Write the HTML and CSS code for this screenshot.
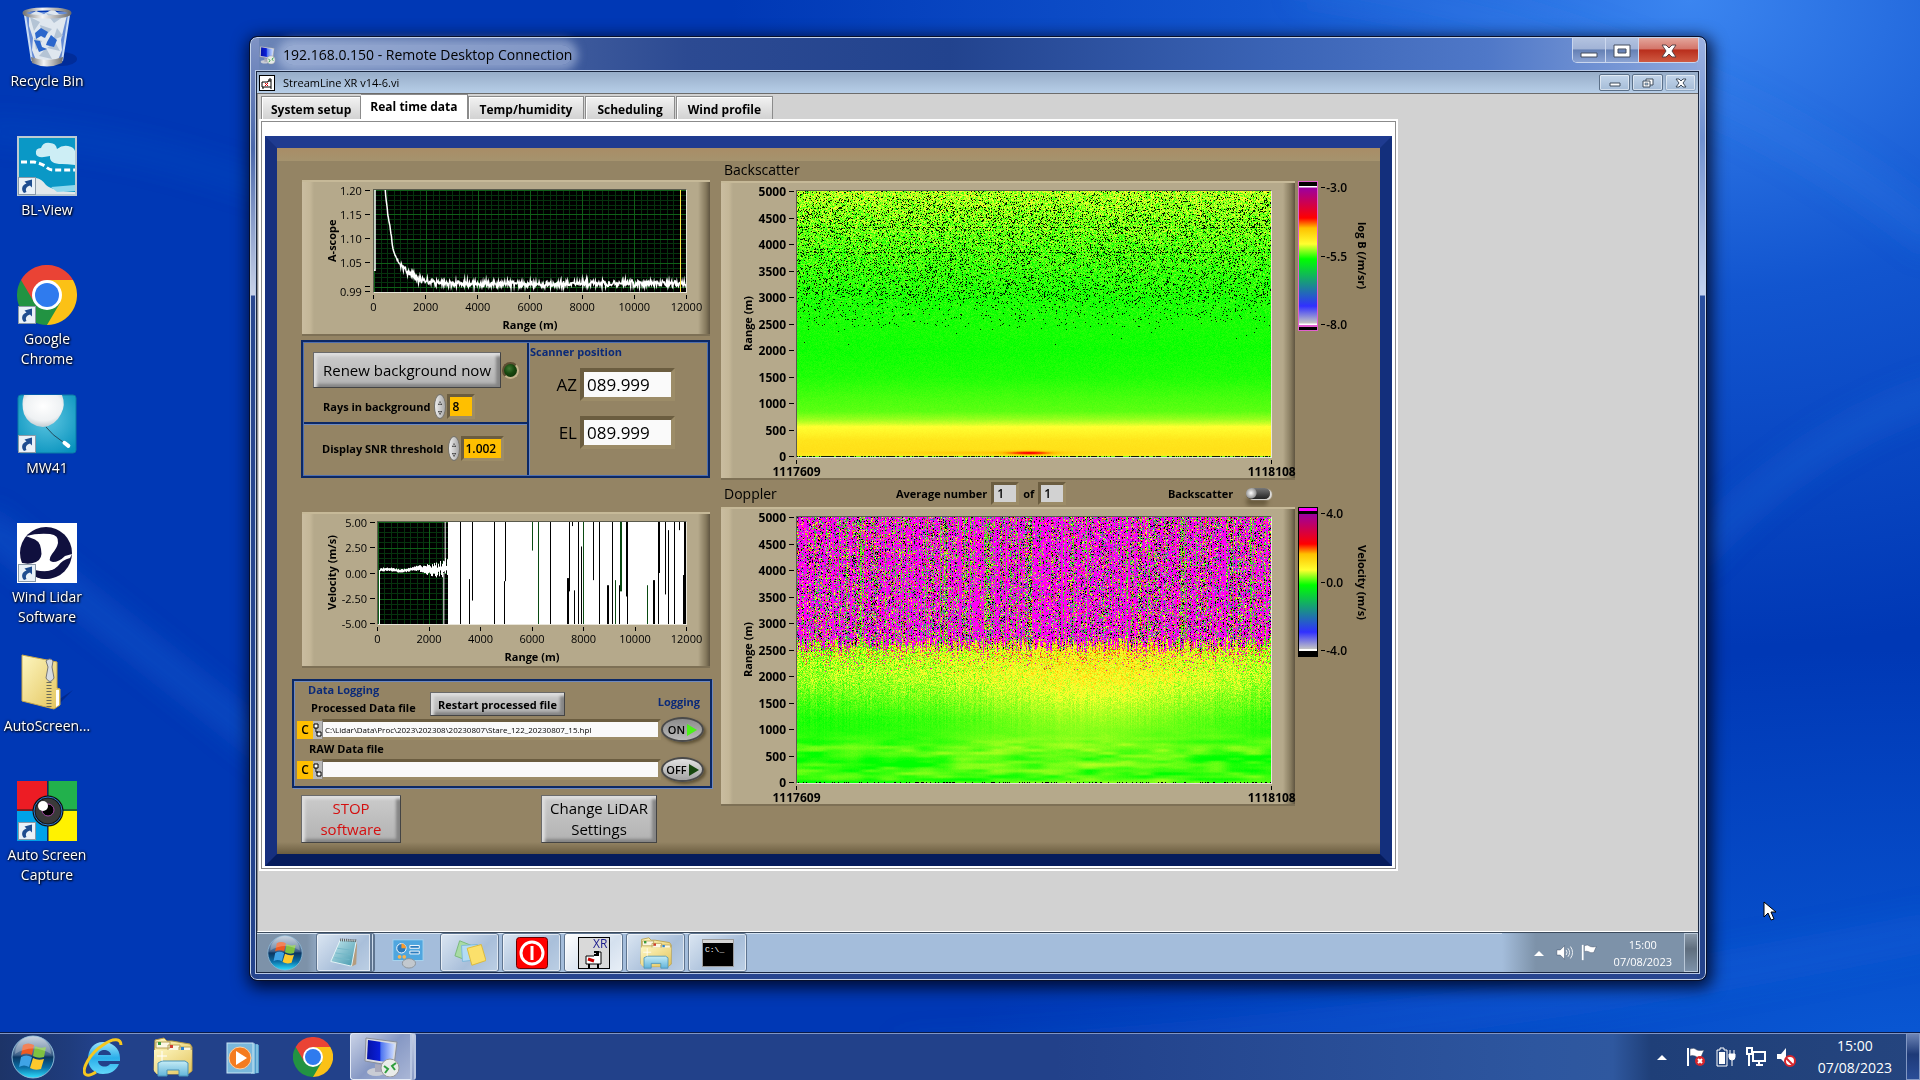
FILE: index.html
```html
<!DOCTYPE html>
<html lang="en">

<head>
  <meta charset="UTF-8">
  <meta name="viewport" content="width=device-width, initial-scale=1.0">
  <title>192.168.0.150 - Remote Desktop Connection</title>
  <link rel="stylesheet" href="styles.css">
</head>

<body>
  <!-- shared icons -->
  <svg class="defs" aria-hidden="true">
    <defs>
      <linearGradient id="g-orb" x1="0" y1="0" x2="0" y2="1">
        <stop offset="0" stop-color="#b9c6d6" /><stop offset=".45" stop-color="#3c5f88" />
        <stop offset=".5" stop-color="#0b3560" /><stop offset=".75" stop-color="#0b6fa6" /><stop offset="1" stop-color="#2ee0ff" />
      </linearGradient>
      <linearGradient id="g-folder" x1="0" y1="0" x2="1" y2="1">
        <stop offset="0" stop-color="#fdf6c0" /><stop offset="1" stop-color="#e3c45c" />
      </linearGradient>
      <linearGradient id="g-screen" x1="0" y1="0" x2="1" y2="0">
        <stop offset="0" stop-color="#0512a8" /><stop offset=".45" stop-color="#0a1fd8" />
        <stop offset=".5" stop-color="#4d74f0" /><stop offset="1" stop-color="#d4e2ff" />
      </linearGradient>
      <linearGradient id="g-note" x1="0" y1="0" x2="1" y2="1">
        <stop offset="0" stop-color="#c8eaf0" /><stop offset="1" stop-color="#3f95ab" />
      </linearGradient>
      <linearGradient id="g-ie" x1="0" y1="0" x2="0" y2="1">
        <stop offset="0" stop-color="#9be4fb" /><stop offset=".5" stop-color="#2aaeea" /><stop offset="1" stop-color="#63d8fb" />
      </linearGradient>
      <linearGradient id="g-steel" x1="0" y1="0" x2="1" y2="0">
        <stop offset="0" stop-color="#777" /><stop offset=".4" stop-color="#f4f4f4" /><stop offset="1" stop-color="#6e6e6e" />
      </linearGradient>
      <radialGradient id="g-balloon" cx=".5" cy=".35" r=".65">
        <stop offset="0" stop-color="#fff" /><stop offset=".7" stop-color="#eef1f3" /><stop offset="1" stop-color="#c3ccd2" />
      </radialGradient>
      <radialGradient id="g-teal" cx=".5" cy=".4" r=".7">
        <stop offset="0" stop-color="#5fc7e2" /><stop offset="1" stop-color="#0792bd" />
      </radialGradient>
      <linearGradient id="g-glass" x1="0" y1="0" x2="0" y2="1">
        <stop offset="0" stop-color="#c5ecf6" /><stop offset="1" stop-color="#62b4da" />
      </linearGradient>
    </defs>

    <symbol id="i-shortcut" viewBox="0 0 18 18">
      <rect x=".5" y=".5" width="17" height="17" fill="#e9f1f8" stroke="#8b9aa8" />
      <path d="M6 16c-3-3-2.500-8 2.500-9.500L6.500 4.500 14 2.500v8L12 8.500c-3.500 1-5 3.500-3.500 6.500z" fill="#1f4d8f" />
    </symbol>

    <symbol id="i-bin" viewBox="0 0 60 60">
      <ellipse cx="44" cy="52" rx="16" ry="7" fill="#001f7d" opacity=".5" />
      <path d="M7 5h46l-8 49q-15 8-30 0z" fill="#9ab9e8" opacity=".65" />
      <path d="M12 8l7-4 8 3 9-5 6 5 8 1-3 12-3 13 1 10-4 10H19l-4-10 1-12-4-12z" fill="#dfe7ef" />
      <path d="M13 10l10 5-6 9zM29 6l8 10 9-6zM23 18l12 4-9 9zM40 21l6 8-10 4zM17 31l8 3-6 9zM30 41l8-6 5 9zM22 49l7-8 6 11z" fill="#b4c4d5" />
      <path d="M18 26l6-5 7 4-3 6-4-2-5 3zM34 28l6 5-3 7-8-2 1-3zM17 33l6 1 2 6 5 2-8 3z" fill="#2a66cc" />
      <path d="M8 8l7 46M52 8l-7 46" stroke="#c9dcf4" stroke-width="2" />
      <ellipse cx="30" cy="6" rx="23" ry="4" fill="none" stroke="url(#g-steel)" stroke-width="3" />
      <path d="M14 50q16 6 32 0l-1 6q-15 7-30 0z" fill="url(#g-steel)" />
    </symbol>

    <symbol id="i-blview" viewBox="0 0 60 60">
      <rect x="1" y="1" width="58" height="58" fill="#0a98c6" stroke="#bccbd3" stroke-width="2" />
      <path d="M19 18q-1-6 5-6 2-6 9-5 6 0 7 6 5-4 11-3 6 1 7 5v14q-8-1-13-1-13 0-12-8-13 3-14-2z" fill="#cdeef5" />
      <path d="M4 26h13q6 1 11 4 4 4 8 4h22" fill="none" stroke="#fff" stroke-width="3" stroke-dasharray="6 3" />
      <path d="M19 42q6 1 10 7 7 6 29 7v2H19z" fill="#e3e8ea" />
      <path d="M34 51l24-2v6l-18 1z" fill="#8ed8ee" />
    </symbol>

    <symbol id="i-chrome" viewBox="0 0 60 60">
      <path d="M30 30V15h26A30 30 0 0 1 30 60z" fill="#fbc116" />
      <path d="M30 30l13 8L30 60A30 30 0 0 1 4 15z" fill="#229342" />
      <path d="M4 15l13 22 13-22h26A30 30 0 0 0 4 15z" fill="#ea4335" />
      <circle cx="30" cy="30" r="15" fill="#fff" />
      <circle cx="30" cy="30" r="12" fill="#2f7bee" />
    </symbol>

    <symbol id="i-balloon" viewBox="0 0 60 60">
      <rect x="1" y="1" width="58" height="58" rx="3" fill="url(#g-teal)" stroke="#0b7ba6" />
      <path d="M7 1h38q4 10-1 19-6 12-18 13Q12 32 7 20 4 10 7 1z" fill="url(#g-balloon)" />
      <path d="M29 33q6 8 17 15" stroke="#234a5c" fill="none" />
      <rect x="45" y="48" width="9" height="4" rx="2" fill="#fff" transform="rotate(38 49 50)" />
    </symbol>

    <symbol id="i-lidar" viewBox="0 0 60 60">
      <rect width="60" height="60" fill="#fff" />
      <circle cx="29" cy="30" r="26" fill="#10103e" />
      <path d="M9 13q11-3 24-2 9 1 8 9-1 5-6 11-5 7 1 8 6 0 12-6l7-2-2 4q-8 2-12 8-6 6-17 6H0V38q10 5 19 1 7-3 5-13-1-9-10-11z" fill="#fff" />
      <path d="M18 47q17 4 26-5l8-4q-9 17-23 18-7 0-11-3z" fill="#10103e" />
    </symbol>

    <symbol id="i-zip" viewBox="0 0 60 60">
      <path d="M32 54l24-16-14 14z" fill="#00237f" opacity=".7" />
      <path d="M5 3l30 6 5 1v26l3 1v16l-6 4L5 49z" fill="url(#g-folder)" stroke="#c9a94a" />
      <path d="M39 38l3 0v15l-3 2z" fill="#fff" />
      <path d="M32 30v26" stroke="#6b6b58" stroke-width="5" stroke-dasharray="1 2" />
      <path d="M29 9q4-4 7 0l-1 6 2 11q-4 7-8 0l2-11z" fill="#d7dce0" stroke="#777" />
    </symbol>

    <symbol id="i-autocap" viewBox="0 0 60 60">
      <path d="M0 0h30v30H0z" fill="#ed1c24" /><path d="M31 0h29v30H31z" fill="#22b14c" />
      <path d="M0 30h30v30H0z" fill="#00a2e8" /><path d="M31 30h29v30H31z" fill="#fff200" />
      <path d="M31 0v60M0 29h60" stroke="#1a1a1a" stroke-width="1" />
      <circle cx="31" cy="30" r="14" fill="#3a3a3a" stroke="#111" stroke-width="3" />
      <circle cx="31" cy="30" r="14" fill="none" stroke="#2f7bd0" stroke-width="1" />
      <circle cx="31" cy="29" r="6" fill="#000" stroke="#a349a4" />
      <circle cx="26" cy="25" r="5" fill="#fff" />
    </symbol>

    <symbol id="i-orb" viewBox="0 0 44 44">
      <circle cx="22" cy="22" r="21" fill="url(#g-orb)" stroke="#8bb8d6" />
      <path d="M12 10q5-3 11 0l-2 10q-6-3-11 0z" fill="#ee5a22" />
      <path d="M24 11q5 3 11 1l-2 10q-6 2-11-1z" fill="#7fc241" />
      <path d="M10 22q5-3 11 0l-3 10q-5-3-10 0z" fill="#3fa3e6" />
      <path d="M22 23q5 3 11 1l-3 10q-6 2-11-1z" fill="#fdc92c" />
      <path d="M4 19A18 18 0 0 1 40 19Q22 8 4 19z" fill="#fff" opacity=".25" />
    </symbol>

    <symbol id="i-ie" viewBox="0 0 40 40">
      <path d="M20 5c9 0 17 6 17 16v3H15c0 5 8 8 12 3h9c-3 7-9 10-16 10C11 37 5 30 5 22 5 12 11 5 20 5zm-5 13h13c-1-6-12-7-13 0z" fill="url(#g-ie)" fill-rule="evenodd" />
      <path d="M38 8c0-6-7-8-18 0C6 17-1 32 2 37c3 3 8 0 11-2" fill="none" stroke="#f6c720" stroke-width="3" />
    </symbol>

    <symbol id="i-explorer" viewBox="0 0 40 40">
      <path d="M2 3l9-2 3 3h5l18 3 2 3v24l-4 3H4l-3-4z" fill="url(#g-folder)" stroke="#b79a43" />
      <path d="M3 5h14v6H3zM15 8h12v6H15zM26 10h12v6H26z" fill="#fbf7e4" stroke="#b9a45a" />
      <path d="M5 5h3v3H5z" fill="#3a9a3a" /><path d="M17 8h3v3h-3z" fill="#d23c2e" /><path d="M28 10h3v3h-3z" fill="#2d83cf" />
      <path d="M1 13h38l-1 21-3 3H4l-3-3z" fill="url(#g-folder)" />
      <path d="M5 39V26l4-2h23l3 2v13h-9v-6H14v6z" fill="url(#g-glass)" stroke="#4a93b8" />
      <path d="M9 14v10M4 19h10" stroke="#fff" />
    </symbol>

    <symbol id="i-wmp" viewBox="0 0 36 36">
      <path d="M26 4l8 2v28l-8 1z" fill="#4f9ccb" /><path d="M29 4v31M32 5v29" stroke="#b4e0f3" />
      <rect x="2" y="4" width="26" height="30" fill="#7ab8dc" stroke="#c9e6f4" />
      <circle cx="15" cy="19" r="11" fill="#f47b20" stroke="#fbd1a5" />
      <path d="M11 12l11 7-11 7z" fill="#fff" />
    </symbol>

    <symbol id="i-rdp" viewBox="0 0 40 40">
      <ellipse cx="15" cy="35" rx="9" ry="4" fill="#c9ccd4" />
      <path d="M14 27l8 1 1 7h-9z" fill="#aab" />
      <path d="M5 1l31 4-3 24-29-5z" fill="#d9dbe0" stroke="#8a8f99" />
      <path d="M7 3l27 4-3 19-25-4z" fill="url(#g-screen)" />
      <circle cx="29" cy="31" r="9" fill="#e9ece9" stroke="#999" />
      <path d="M23 29l4 3-3 4M35 26l-4 3 3 4" fill="none" stroke="#2f9e3d" stroke-width="2" />
    </symbol>

    <symbol id="i-notepad" viewBox="0 0 34 34">
      <path d="M31 4l-1 25-6 3z" fill="#b59c7d" />
      <path d="M13 3l17 1-5 27L3 26z" fill="url(#g-note)" stroke="#e8f5f8" />
      <path d="M13 3l17 1" stroke="#555" stroke-width="3" stroke-dasharray="1 1" />
      <path d="M10 12l15 2M8 17l16 2M7 22l16 2" stroke="#74b9c9" />
    </symbol>

    <symbol id="i-panel" viewBox="0 0 34 34">
      <rect x="1" y="3" width="32" height="22" fill="#4fa6df" stroke="#a8d4ef" />
      <circle cx="10" cy="12" r="5" fill="#2b7bbd" stroke="#fff" /><path d="M10 12V7a5 5 0 0 1 5 5z" fill="#f89b2e" />
      <path d="M19 9h10v3H19zM19 15h10v3H19z" fill="#2b7bbd" stroke="#fff" />
      <circle cx="8" cy="21" r="2" fill="#f8b34e" /><circle cx="13" cy="21" r="2" fill="#f8b34e" />
      <ellipse cx="18" cy="28" rx="7" ry="5" fill="#c2c8ce" stroke="#8b9299" />
    </symbol>

    <symbol id="i-sticky" viewBox="0 0 34 34">
      <path d="M6 4l15 6-7 15-13-5z" fill="#a8dba4" stroke="#78b977" />
      <path d="M8 9l17-1 1 16-17 2z" fill="#b3dcf4" stroke="#7db6d9" />
      <path d="M14 12l15-4 5 17-15 5z" fill="#fbe06b" stroke="#dab93b" />
    </symbol>

    <symbol id="i-power" viewBox="0 0 32 32">
      <rect x=".5" y=".5" width="31" height="31" rx="3" fill="#f00" stroke="#6b0000" />
      <circle cx="16" cy="16" r="11" fill="none" stroke="#fff" stroke-width="3" />
      <path d="M16 9v14" stroke="#fff" stroke-width="3" />
    </symbol>

    <symbol id="i-vi" viewBox="0 0 16 16">
      <rect x=".5" y=".5" width="15" height="15" fill="#fff" stroke="#000" />
      <path d="M3 12V7h6V6h3v6z" fill="none" stroke="#000" />
      <path d="M10 6V4h2v2M4 12v2M12 12v2" fill="none" stroke="#000" />
      <path d="M6 8l3 3M9 8l-3 3" stroke="#d00" />
    </symbol>

    <symbol id="i-up" viewBox="0 0 10 6"><path d="M0 6l5-5 5 5z" fill="#fff" /></symbol>
    <symbol id="i-flag" viewBox="0 0 20 20">
      <path d="M2 1v18" stroke="#fff" stroke-width="2" />
      <path d="M4 2q4-2 7 1 3 1 7 0l-3 7q-4 1-6-1-3-1-5 0z" fill="#fff" stroke="#33415a" stroke-width=".5" />
    </symbol>
    <symbol id="i-speaker" viewBox="0 0 20 20">
      <path d="M1 7h4l5-5v16l-5-5H1z" fill="#fff" stroke="#33415a" stroke-width=".5" />
      <path d="M12 7q2 3 0 6M14 5q4 5 0 10M17 3q5 7 0 14" fill="none" stroke="#fff" />
    </symbol>
  </svg>

  <div class="desktop">
    <svg class="wallpaper" viewBox="0 0 1920 1080" preserveAspectRatio="none" aria-hidden="true">
      <filter id="soft"><feGaussianBlur stdDeviation="14" /></filter>
      <g filter="url(#soft)" fill="none" stroke="#2a7be8">
        <path d="M-20 130q150 5 320 70" stroke-width="14" opacity=".2" />
        <path d="M-20 520q140 110 330 260" stroke-width="26" opacity=".3" />
        <path d="M1690 560q120-130 260-170" stroke-width="26" opacity=".25" />
        <path d="M1300 -20q400 60 640 260" stroke-width="40" opacity=".25" />
        <path d="M900 1060q500-20 1040-130" stroke-width="40" opacity=".15" />
      </g>
    </svg>

    <nav class="shortcuts">
      <a class="shortcut" href="#"><svg class="pic"><use href="#i-bin" /></svg><span>Recycle Bin</span></a>
      <a class="shortcut link" href="#"><svg class="pic"><use href="#i-blview" /></svg><svg class="arrow"><use href="#i-shortcut" /></svg><span>BL-View</span></a>
      <a class="shortcut link" href="#"><svg class="pic"><use href="#i-chrome" /></svg><svg class="arrow"><use href="#i-shortcut" /></svg><span>Google<br>Chrome</span></a>
      <a class="shortcut link" href="#"><svg class="pic"><use href="#i-balloon" /></svg><svg class="arrow"><use href="#i-shortcut" /></svg><span>MW41</span></a>
      <a class="shortcut link" href="#"><svg class="pic"><use href="#i-lidar" /></svg><svg class="arrow"><use href="#i-shortcut" /></svg><span>Wind Lidar<br>Software</span></a>
      <a class="shortcut" href="#"><svg class="pic"><use href="#i-zip" /></svg><span>AutoScreen...</span></a>
      <a class="shortcut link" href="#"><svg class="pic"><use href="#i-autocap" /></svg><svg class="arrow"><use href="#i-shortcut" /></svg><span>Auto Screen<br>Capture</span></a>
    </nav>

    <section class="window">
      <header class="titlebar">
        <svg class="title-icon"><use href="#i-rdp" /></svg>
        <h1>192.168.0.150 - Remote Desktop Connection</h1>
        <div class="win-buttons">
          <button class="min" aria-label="Minimize"><svg viewBox="0 0 18 14"><path d="M1 9h16v4H1z" fill="#fff" stroke="#444d5e" /></svg></button>
          <button class="max" aria-label="Maximize"><svg viewBox="0 0 18 14"><path d="M1 1h16v12H1zM5 5v4h8V5z" fill="#fff" fill-rule="evenodd" stroke="#444d5e" /></svg></button>
          <button class="close" aria-label="Close"><svg viewBox="0 0 18 14"><path d="M2 1h4l3 3 3-3h4l-4 6 4 6h-4l-3-3-3 3H2l4-6z" fill="#fff" stroke="#5a4045" /></svg></button>
        </div>
      </header>

      <div class="remote">
        <div class="app-title">
          <svg class="vi-icon"><use href="#i-vi" /></svg>
          <h2>StreamLine XR v14-6.vi</h2>
          <div class="mdi-buttons">
            <button aria-label="Minimize window"><svg viewBox="0 0 12 10"><path d="M1 5h10v3H1z" fill="#fff" stroke="#3f4c5c" /></svg></button>
            <button aria-label="Restore window"><svg viewBox="0 0 12 10"><path d="M4 1h7v6H4z" fill="#fff" stroke="#3f4c5c" /><path d="M1 3h7v6H1z" fill="#fff" stroke="#3f4c5c" /><path d="M3 5h3v2H3z" fill="#9db4cc" stroke="#3f4c5c" stroke-width=".5" /></svg></button>
            <button class="faded" aria-label="Close window"><svg viewBox="0 0 12 10"><path d="M1 1h3l2 2 2-2h3L8 5l3 4H8L6 7 4 9H1l3-4z" fill="#fff" stroke="#3f4c5c" /></svg></button>
          </div>
        </div>

        <main class="workspace">
          <div class="tabs" role="tablist">
            <button class="tab" role="tab">System setup</button>
            <button class="tab active" role="tab" aria-selected="true">Real time data</button>
            <button class="tab" role="tab">Temp/humidity</button>
            <button class="tab" role="tab">Scheduling</button>
            <button class="tab" role="tab">Wind profile</button>
          </div>

          <div class="page">
            <div class="panel">
              <div class="left-col">
                <figure class="chart small scope">
                  <div class="y-label">A-scope</div>
                  <div class="y-ticks"><span>1.20</span><span>1.15</span><span>1.10</span><span>1.05</span><span></span><span>0.99</span></div>
                  <canvas id="ascope"></canvas>
                  <div class="x-ticks"><span>0</span><span>2000</span><span>4000</span><span>6000</span><span>8000</span><span>10000</span><span>12000</span></div>
                  <figcaption class="x-label">Range (m)</figcaption>
                </figure>

                <div class="controls">
                  <div class="cell background">
                    <div class="line">
                      <button class="metal renew">Renew background now</button>
                      <i class="led"></i>
                    </div>
                    <div class="line setting">
                      <label for="rays">Rays in background</label>
                      <span class="spinner" aria-hidden="true"><i>▵</i><i>▿</i></span>
                      <input class="amber rays" id="rays" value="8">
                    </div>
                  </div>
                  <div class="cell threshold">
                    <div class="line setting">
                      <label for="snr">Display SNR threshold</label>
                      <span class="spinner" aria-hidden="true"><i>▵</i><i>▿</i></span>
                      <input class="amber snr" id="snr" value="1.002">
                    </div>
                  </div>
                  <div class="cell scanner">
                    <h3>Scanner position</h3>
                    <div class="axis"><label for="az">AZ</label><input id="az" value="089.999" readonly></div>
                    <div class="axis"><label for="el">EL</label><input id="el" value="089.999" readonly></div>
                  </div>
                </div>

                <figure class="chart small velocity">
                  <div class="y-label">Velocity (m/s)</div>
                  <div class="y-ticks"><span>5.00</span><span>2.50</span><span>0.00</span><span>-2.50</span><span>-5.00</span></div>
                  <canvas id="velocity"></canvas>
                  <div class="x-ticks"><span>0</span><span>2000</span><span>4000</span><span>6000</span><span>8000</span><span>10000</span><span>12000</span></div>
                  <figcaption class="x-label">Range (m)</figcaption>
                </figure>

                <div class="logging">
                  <div class="log-head">
                    <div>
                      <h3>Data Logging</h3>
                      <label for="processed">Processed Data file</label>
                    </div>
                    <button class="metal restart">Restart processed file</button>
                    <h3 class="log-title">Logging</h3>
                  </div>
                  <div class="path">
                    <b class="drive">C</b>
                    <svg class="branch" viewBox="0 0 9 18"><path d="M1 3h4v4H1zM4 11h4v4H4zM3 7v4h2" fill="#fff" stroke="#000" /></svg>
                    <input id="processed" value="C:\Lidar\Data\Proc\2023\202308\20230807\Stare_122_20230807_15.hpl">
                    <button class="toggle on">ON</button>
                  </div>
                  <label class="raw-label" for="raw">RAW Data file</label>
                  <div class="path">
                    <b class="drive">C</b>
                    <svg class="branch" viewBox="0 0 9 18"><path d="M1 3h4v4H1zM4 11h4v4H4zM3 7v4h2" fill="#fff" stroke="#000" /></svg>
                    <input id="raw" value="">
                    <button class="toggle off">OFF</button>
                  </div>
                </div>

                <div class="actions">
                  <button class="metal stop">STOP<br>software</button>
                  <button class="metal change">Change LiDAR<br>Settings</button>
                </div>
              </div>

              <div class="right-col">
                <h3 class="chart-title">Backscatter</h3>
                <div class="plot-row">
                  <figure class="chart big">
                    <div class="y-label">Range (m)</div>
                    <div class="y-ticks"><span>5000</span><span>4500</span><span>4000</span><span>3500</span><span>3000</span><span>2500</span><span>2000</span><span>1500</span><span>1000</span><span>500</span><span>0</span></div>
                    <canvas id="backscatter"></canvas>
                    <div class="x-ticks"><span>1117609</span><span>1118108</span></div>
                  </figure>
                  <div class="scale">
                    <div class="ramp pink"></div>
                    <div class="scale-ticks"><span>-3.0</span><span>-5.5</span><span>-8.0</span></div>
                    <div class="scale-label">log B (/m/sr)</div>
                  </div>
                </div>
                <div class="mid-row">
                  <h3 class="chart-title">Doppler</h3>
                  <div class="average">
                    <label for="avg">Average number</label>
                    <input id="avg" value="1">
                    <label for="avg-total">of</label>
                    <input id="avg-total" value="1">
                  </div>
                  <label class="switch">Backscatter<input type="checkbox"><i></i></label>
                </div>
                <div class="plot-row">
                  <figure class="chart big">
                    <div class="y-label">Range (m)</div>
                    <div class="y-ticks"><span>5000</span><span>4500</span><span>4000</span><span>3500</span><span>3000</span><span>2500</span><span>2000</span><span>1500</span><span>1000</span><span>500</span><span>0</span></div>
                    <canvas id="doppler"></canvas>
                    <div class="x-ticks"><span>1117609</span><span>1118108</span></div>
                  </figure>
                  <div class="scale">
                    <div class="ramp dark"></div>
                    <div class="scale-ticks"><span>4.0</span><span>0.0</span><span>-4.0</span></div>
                    <div class="scale-label">Velocity (m/s)</div>
                  </div>
                </div>
              </div>
            </div>
          </div>
        </main>

        <footer class="remote-bar">
          <button class="start" aria-label="Start"><svg><use href="#i-orb" /></svg></button>
          <button class="task stacked" aria-label="Notepad"><svg><use href="#i-notepad" /></svg></button>
          <button class="task pinned" aria-label="Control Panel"><svg><use href="#i-panel" /></svg></button>
          <button class="task" aria-label="Sticky Notes"><svg><use href="#i-sticky" /></svg></button>
          <button class="task" aria-label="Shutdown"><svg><use href="#i-power" /></svg></button>
          <button class="task current" aria-label="StreamLine XR">
            <svg viewBox="0 0 32 32">
              <rect x=".5" y=".5" width="31" height="31" fill="#d9d9d9" stroke="#000" />
              <text class="xr-text" x="15" y="11">XR</text>
              <path d="M8 19h8l4-4h3v12H8z" fill="#fff" stroke="#000" />
              <path d="M16 15h4v3h-4M11 27v5M20 27v5" fill="none" stroke="#000" stroke-width="2" />
              <path d="M10 22l6 2" stroke="#c00" stroke-width="3" />
            </svg>
          </button>
          <button class="task" aria-label="Explorer"><svg><use href="#i-explorer" /></svg></button>
          <button class="task" aria-label="Command Prompt">
            <svg viewBox="0 0 32 28">
              <rect x=".5" y=".5" width="31" height="27" fill="#000" stroke="#9a9a9a" />
              <path d="M1 1h30v3H1z" fill="#d5d5d5" />
              <text class="cmd-text" x="3" y="13">C:\_</text>
            </svg>
          </button>
          <div class="tray">
            <svg class="up"><use href="#i-up" /></svg>
            <svg><use href="#i-speaker" /></svg>
            <svg><use href="#i-flag" /></svg>
            <time>15:00<br>07/08/2023</time>
            <button class="peek" aria-label="Show desktop"></button>
          </div>
        </footer>
      </div>
    </section>

    <footer class="taskbar">
      <button class="start" aria-label="Start"><svg><use href="#i-orb" /></svg></button>
      <button class="item" aria-label="Internet Explorer"><svg><use href="#i-ie" /></svg></button>
      <button class="item" aria-label="Windows Explorer"><svg><use href="#i-explorer" /></svg></button>
      <button class="item" aria-label="Media Player"><svg class="wmp"><use href="#i-wmp" /></svg></button>
      <button class="item" aria-label="Google Chrome"><svg><use href="#i-chrome" /></svg></button>
      <button class="item open" aria-label="Remote Desktop"><svg><use href="#i-rdp" /></svg></button>
      <div class="tray">
        <svg class="up"><use href="#i-up" /></svg>
        <svg viewBox="0 0 20 20"><use href="#i-flag" /><circle cx="14" cy="14" r="5" fill="#d8262c" /><path d="M12 12l4 4M16 12l-4 4" stroke="#fff" stroke-width="2" /></svg>
        <svg viewBox="0 0 20 20"><path d="M1 3h3V1h4v2h3v16H1z" fill="none" stroke="#fff" stroke-width="1" /><path d="M3 5h6v12H3z" fill="#fff" /><path d="M13 7h6v3q0 3-3 3t-3-3zM14 3v4M18 3v4M16 13v6" fill="#fff" stroke="#fff" stroke-width="1" /></svg>
        <svg viewBox="0 0 20 20"><path d="M7 5h12v9H7zM10 18h7M13 14v4M1 1h5v6H1zM3 7v12" fill="none" stroke="#fff" stroke-width="2" /></svg>
        <svg viewBox="0 0 20 20"><path d="M1 7h4l5-6v16l-5-5H1z" fill="#fff" /><circle cx="14" cy="14" r="5" fill="#fff" stroke="#d8262c" stroke-width="2" /><path d="M10 11l7 7" stroke="#d8262c" stroke-width="2" /></svg>
        <time>15:00<br>07/08/2023</time>
        <button class="peek" aria-label="Show desktop"></button>
      </div>
    </footer>

    <svg class="cursor" viewBox="0 0 13 20" aria-hidden="true"><path d="M1 1v15l4-4 3 7 3-1-3-7h5z" fill="#fff" stroke="#000" /></svg>
  </div>

  <script src="script.js"></script>
</body>

</html>
```
FILE: styles.css
```css
* {
  box-sizing: border-box;
}

body {
  margin: 0;
  font-family: "Open Sans", "Noto Sans", sans-serif;
  font-size: 14px;
  color: #000;
}

h1,
h2,
h3,
figure {
  margin: 0;
  font-weight: 400;
}

button,
input {
  font-family: inherit;
  color: inherit;
  padding: 0;
  margin: 0;
  border: none;
}

button {
  cursor: pointer;
}

.defs {
  position: absolute;
  width: 0;
  height: 0;
}

.desktop {
  position: relative;
  height: 100vh;
  overflow: hidden;
  background:
    radial-gradient(ellipse 50% 60% at 88% 0, #3b85f0 0, rgba(30, 105, 225, 0.6) 45%, rgba(0, 60, 190, 0) 100%),
    radial-gradient(ellipse 50% 40% at 100% 100%, #0a5ad6 0, rgba(0, 60, 190, 0) 100%),
    #0038b5;
}

.wallpaper {
  position: absolute;
  width: 100%;
  height: 100%;
}

/* desktop icons */
.shortcuts {
  position: absolute;
  top: 7px;
  left: 0;
  width: 94px;
  display: flex;
  flex-direction: column;
}

.shortcut {
  position: relative;
  height: 129px;
  display: flex;
  flex-direction: column;
  align-items: center;
  gap: 4px;
  color: #fff;
  text-decoration: none;
  text-align: center;
  line-height: 20px;
  text-shadow: 1px 1px 2px #000, 0 0 3px #000;
}

.shortcut .pic {
  width: 60px;
  height: 60px;
}

.shortcut .arrow {
  position: absolute;
  left: 18px;
  top: 41px;
  width: 18px;
  height: 18px;
}

.shortcut span {
  white-space: nowrap;
}

/* remote desktop window */
.window {
  position: absolute;
  left: 250px;
  right: 214px;
  top: 37px;
  bottom: 100px;
  padding: 0 6px 6px 5px;
  display: flex;
  flex-direction: column;
  border: 1px solid #c4d3ea;
  border-radius: 7px;
  outline: 1px solid #07102c;
  background:
    linear-gradient(to bottom, #7f93c4 0, #4a67aa 110px, #8fa2cd 190px, #c8d2e8 257px, #2a4890 258px, #24438c 100%) left / 8px 100% no-repeat,
    linear-gradient(to bottom, #9db2e2 0, #6f90d0 100px, #a9bce4 200px, #c4d2ef 257px, #2a4fa0 258px, #24438c 100%) right / 8px 100% no-repeat,
    linear-gradient(to right, #6d86b8 0, #2c4a92 30%, #22438e 48%, #3a63b5 70%, #4f78c8 85%, #8fa9dd 100%) top / 100% 36px no-repeat,
    #27458f;
  box-shadow: 2px 4px 16px 4px rgba(0, 0, 20, 0.8);
}

.titlebar {
  height: 33px;
  display: flex;
  align-items: center;
}

.title-icon {
  width: 18px;
  height: 20px;
  margin: 0 7px 0 2px;
}

.titlebar h1 {
  font-size: 14px;
  line-height: 20px;
  border-radius: 10px;
  background: rgba(195, 210, 238, 0.5);
  box-shadow: 0 0 9px 6px rgba(195, 210, 238, 0.5);
}

.win-buttons {
  align-self: flex-start;
  margin-left: auto;
  display: flex;
  border: 1px solid #c9d6ee;
  border-top: none;
  border-radius: 0 0 5px 5px;
  overflow: hidden;
}

.win-buttons button {
  width: 33px;
  height: 24px;
  border-right: 1px solid #cdd8ee;
  background: linear-gradient(to bottom, #b3c3e0 0, #a1b3d6 45%, #6580b4 50%, #8ba3d3 100%);
}

.win-buttons .close {
  width: 59px;
  border-right: none;
  background: linear-gradient(to bottom, #e3a69c 0, #d4766a 45%, #b92e1c 50%, #cf5a42 100%);
}

.win-buttons svg {
  width: 18px;
  height: 14px;
  vertical-align: middle;
}

.remote {
  flex: 1;
  min-height: 0;
  display: flex;
  flex-direction: column;
  border: 1px solid #1a2740;
  outline: 1px solid #b7c8e6;
  background: #d2d2d2;
}

.app-title {
  height: 22px;
  flex: none;
  display: flex;
  align-items: center;
  padding: 0 2px;
  border-bottom: 1px solid #6c6c6c;
  background: linear-gradient(to bottom, #97adc8, #b7cee8);
}

.vi-icon {
  width: 16px;
  height: 16px;
  margin-right: 8px;
}

.app-title h2 {
  font-size: 11px;
}

.mdi-buttons {
  margin-left: auto;
  display: flex;
  gap: 2px;
}

.mdi-buttons button {
  width: 31px;
  height: 17px;
  display: flex;
  align-items: center;
  justify-content: center;
  border: 1px solid #5b7089;
  border-radius: 2px;
  box-shadow: inset 0 0 0 1px rgba(255, 255, 255, 0.5);
  background: linear-gradient(to bottom, #c3d5ea, #a5bcd7);
}

.mdi-buttons .faded {
  border-color: #8ea6c1;
}

.mdi-buttons svg {
  width: 12px;
  height: 10px;
}

/* LabVIEW front panel */
.workspace {
  flex: 1;
  min-height: 0;
  padding-left: 3px;
  border-left: 1px solid #8a8a8a;
  border-bottom: 1px solid #fff;
  overflow: hidden;
}

.tabs {
  display: flex;
  align-items: flex-end;
  height: 27px;
}

.tab {
  height: 25px;
  padding: 0 9px;
  font-size: 12px;
  font-weight: 700;
  border: 1px solid #8b8b8b;
  border-bottom: none;
  box-shadow: inset 1px 1px #fff;
  background: linear-gradient(to bottom, #f2f2f2, #cfcfcf);
}

.tab.active {
  height: 27px;
  padding-bottom: 4px;
  background: #fff;
  border-left: none;
}

.tab.active ~ .tab {
  padding: 0 11px;
  margin-right: 1px;
}

.page {
  width: 79%;
  padding: 14px 3px 2px 3px;
  background: #fff;
  border: 1px solid #8b8b8b;
  outline: 2px solid #fff;
}

.panel {
  display: grid;
  grid-template-columns: 420px minmax(0, 1fr);
  column-gap: 9px;
  padding: 0 7px 11px 15px;
  border: 12px solid #17307f;
  border-color: #1f3b90 #132f7c #061c5c #17307f;
  background:
    linear-gradient(to bottom, #a98d66, #a5936e) top / 100% 13px no-repeat,
    linear-gradient(to bottom, rgba(148, 132, 100, 0), #6b5d40) bottom / 100% 12px no-repeat,
    #948464;
}

.left-col {
  padding-top: 32px;
}

.right-col {
  padding-top: 11px;
}

.chart {
  display: grid;
  background:
    linear-gradient(to right, #cabda0 0, #c4b798 8px, rgba(181, 169, 139, 0) 12px),
    linear-gradient(to left, #5f5541 0, #85795d 4px, rgba(181, 169, 139, 0) 12px),
    #b5a98b;
  border-top: 2px solid #c6b998;
  border-bottom: 2px solid #7d7055;
}

.chart canvas {
  grid-area: plot;
  width: 100%;
  height: 100%;
  border: 1px solid #5a5a4c;
  border-right-color: #e8e4d8;
  border-bottom-color: #e8e4d8;
  background: #000;
}

.chart.small {
  height: 156px;
  margin-left: 10px;
  margin-right: 2px;
  padding: 7px 23px 2px 22px;
  grid-template-columns: 16px 33px minmax(0, 1fr);
  grid-template-rows: 104px 22px 1fr;
  grid-template-areas: "ylabel yticks plot" ". . xticks" ". . xlabel";
  font-size: 11px;
}

.chart.velocity {
  grid-template-columns: 16px 37px minmax(0, 1fr);
}

.chart.big {
  flex: 1;
  min-width: 0;
  height: 299px;
  padding: 7px 23px 2px 19px;
  grid-template-columns: 16px 40px minmax(0, 1fr);
  grid-template-rows: 268px 1fr;
  grid-template-areas: "ylabel yticks plot" ". . xticks";
  font-size: 12px;
  font-weight: 700;
}

.y-label {
  grid-area: ylabel;
  writing-mode: vertical-rl;
  transform: rotate(180deg);
  text-align: center;
  line-height: 16px;
  font-size: 11px;
  font-weight: 700;
}

.x-label {
  grid-area: xlabel;
  text-align: center;
  line-height: 20px;
  font-weight: 700;
}

.y-ticks {
  grid-area: yticks;
  display: flex;
  flex-direction: column;
  justify-content: space-between;
  padding: 1px 0;
}

.scope .y-ticks {
  display: grid;
  grid-template-rows: 5fr 5fr 5fr 5fr 1fr 1px;
}

.y-ticks span {
  height: 1px;
  display: flex;
  align-items: center;
  justify-content: flex-end;
  gap: 3px;
  padding-right: 2px;
  line-height: 1px;
}

.y-ticks span::after {
  content: "";
  width: 5px;
  height: 1px;
  background: #000;
}

.x-ticks {
  grid-area: xticks;
  display: flex;
  justify-content: space-between;
  padding-top: 2px;
}

.x-ticks span {
  width: 1px;
  display: flex;
  flex-direction: column;
  align-items: center;
  white-space: nowrap;
  line-height: 16px;
}

.x-ticks span::before {
  content: "";
  width: 1px;
  height: 4px;
  background: #000;
}

/* background / threshold / scanner box */
.controls {
  height: 138px;
  margin: 4px 2px 34px 9px;
  display: grid;
  grid-template-columns: 226px minmax(0, 1fr);
  grid-template-rows: 82px minmax(0, 1fr);
  border: 1px solid #0b2866;
  outline: 1px solid #4f6fae;
  outline-offset: -3px;
  font-size: 11px;
}

.cell {
  border: 1px solid #0b2866;
  box-shadow: inset 1px 1px #6f8ac0;
}

.background {
  padding: 10px 0 0 10px;
}

.threshold {
  padding: 12px 0 0 9px;
}

.scanner {
  grid-column: 2;
  grid-row: 1 / 3;
  padding: 2px 33px 0 1px;
}

.line {
  display: flex;
  align-items: center;
  gap: 1px;
}

.setting {
  padding: 6px 0 0 10px;
}

.threshold .setting {
  padding-top: 0;
}

.setting label {
  font-weight: 700;
  margin-right: 3px;
}

.metal {
  border: 1px solid #4c4c4c;
  border-color: #6a6a6a #444 #444 #6a6a6a;
  box-shadow: inset 3px 3px 3px #dedede, inset -4px -3px 3px #858585;
  background: linear-gradient(to bottom, #cbcbcb, #b2b2b2);
  font-weight: 400;
}

.renew {
  width: 188px;
  height: 36px;
  font-size: 15px;
}

.led {
  width: 17px;
  height: 17px;
  border-radius: 50%;
  border: 2px solid #5d4f33;
  border-color: #5d4f33 #c3b38c #c3b38c #5d4f33;
  background: radial-gradient(circle at 40% 35%, #3f7a33 0, #17470f 45%, #0a2a06 100%);
}

.spinner {
  width: 12px;
  height: 25px;
  display: flex;
  flex-direction: column;
  justify-content: center;
  align-items: center;
  border-radius: 50%;
  border: 1px solid #77746c;
  background: linear-gradient(to right, #eee, #a9a9a9);
}

.spinner i {
  font-size: 8px;
  font-style: normal;
  line-height: 10px;
}

.amber {
  height: 25px;
  padding-left: 2px;
  border: 3px solid;
  border-color: #6b5d40 #9c8c68 #9c8c68 #6b5d40;
  background: #ffbf00;
  font-size: 12px;
  font-weight: 600;
}

.rays {
  width: 28px;
}

.snr {
  width: 43px;
}

.controls h3,
.logging h3 {
  color: #0b2a78;
  font-size: 11px;
  font-weight: 700;
  line-height: 15px;
}

.axis {
  display: flex;
  align-items: center;
  justify-content: flex-end;
  gap: 3px;
  margin: 9px 0 15px;
  font-size: 17px;
}

.axis input {
  width: 95px;
  height: 33px;
  padding-left: 3px;
  border: 4px solid;
  border-color: #6b5d40 #9c8c68 #9c8c68 #6b5d40;
  background: #fafafa;
  font-size: 17px;
}

/* data logging */
.logging {
  margin-top: 11px;
  height: 109px;
  padding: 1px 8px 0 3px;
  border: 2px solid #0b2866;
  box-shadow: inset 1px 1px #6f8ac0, 1px 1px #6f8ac0;
  font-size: 11px;
}

.logging label {
  font-weight: 700;
}

.log-head {
  height: 36px;
  display: grid;
  grid-template-columns: 133px 135px 1fr;
}

.log-head h3 {
  padding-left: 11px;
}

.log-head label {
  display: block;
  padding-left: 14px;
  line-height: 22px;
}

.restart {
  height: 24px;
  margin-top: 10px;
  font-size: 11px;
  font-weight: 700;
}

.log-head .log-title {
  padding: 12px 2px 0 0;
  text-align: right;
}

.path {
  height: 23px;
  display: flex;
  align-items: center;
}

.drive {
  width: 16px;
  height: 18px;
  line-height: 18px;
  text-align: center;
  font-size: 12px;
  font-weight: 600;
  background: #ffbf00;
}

.branch {
  width: 9px;
  height: 18px;
  background: #b9b9b9;
}

.path input {
  flex: 1;
  min-width: 0;
  height: 21px;
  padding-left: 2px;
  border: 3px solid;
  border-color: #6b5d40 #9c8c68 #9c8c68 #8a8a8a;
  border-left-width: 1px;
  background: #fafafa;
  font-size: 8px;
}

.raw-label {
  display: block;
  padding-left: 12px;
  line-height: 15px;
  margin-bottom: 2px;
}

.toggle {
  width: 43px;
  height: 25px;
  margin-right: -2px;
  display: flex;
  align-items: center;
  justify-content: center;
  gap: 2px;
  border-radius: 50%;
  border: 2px solid #4a4a4a;
  box-shadow: 2px 2px 3px #5f5337;
  background: linear-gradient(to bottom, #e2e2e2, #a3a3a3);
  font-size: 11px;
  font-weight: 600;
}

.toggle.on {
  background: linear-gradient(to bottom, #8d8d8d, #b9b9b9);
}

.toggle::after {
  content: "";
  border: 6px solid transparent;
  border-left: 10px solid #17470f;
  border-right: none;
}

.toggle.on::after {
  border-left-color: #4cf01a;
}

.actions {
  display: flex;
  justify-content: space-between;
  padding: 7px 55px 0 9px;
}

.actions .metal {
  height: 48px;
  font-size: 15px;
  line-height: 21px;
}

.actions .stop {
  width: 100px;
  color: #d40f0f;
}

.change {
  width: 116px;
}

/* heat maps */
.chart-title {
  padding-left: 3px;
  font-size: 14px;
  line-height: 22px;
}

.plot-row {
  display: flex;
}

.scale {
  width: 78px;
  height: 150px;
  padding-left: 3px;
  display: flex;
  gap: 3px;
}

.ramp {
  width: 20px;
  border: 1px solid #e25fd0;
  background: linear-gradient(to bottom, #000 4px, #fff 4px, #fff 5px, #9c00a0 6px, #ff0000 36px, #ffc000 46px, #ffff30 62px, #00ff00 77px, #3030ff 124px, #c4c4c4 141px, #fff 142px, #fff 143px, #e25fd0 143px, #e25fd0 145px, #000 145px);
}

.ramp.dark {
  border-color: #000;
  background: linear-gradient(to bottom, #ff00ff 3px, #000 3px, #000 6px, #9c00a0 6px, #ff0000 36px, #ffc000 46px, #ffff30 62px, #00ff00 77px, #3030ff 124px, #c4c4c4 141px, #fff 141px, #fff 143px, #000 143px);
}

.scale-ticks {
  width: 29px;
  display: flex;
  flex-direction: column;
  justify-content: space-between;
  padding: 6px 0;
  font-size: 12px;
  font-weight: 600;
}

.scale-ticks span {
  height: 1px;
  display: flex;
  align-items: center;
  gap: 1px;
  line-height: 1px;
}

.scale-ticks span::before {
  content: "";
  width: 4px;
  height: 1px;
  background: #000;
}

.scale-label {
  writing-mode: vertical-rl;
  text-align: center;
  line-height: 18px;
  font-size: 11px;
  font-weight: 700;
}

.mid-row {
  height: 27px;
  display: flex;
  align-items: center;
  padding-right: 103px;
}

.mid-row .chart-title {
  width: 175px;
}

.average {
  display: flex;
  align-items: center;
  gap: 4px;
  font-size: 11px;
  font-weight: 700;
}

.average input {
  width: 28px;
  height: 23px;
  padding-left: 3px;
  border: 3px solid;
  border-color: #6b5d40 #9c8c68 #9c8c68 #6b5d40;
  background: #d2d2d2;
  font-size: 12px;
  font-weight: 600;
}

.switch {
  margin-left: auto;
  display: flex;
  align-items: center;
  gap: 13px;
  font-size: 11px;
  font-weight: 700;
}

.switch input {
  appearance: none;
  width: 0;
  height: 0;
}

.switch i {
  width: 24px;
  height: 11px;
  margin-left: -13px;
  border-radius: 6px;
  background: radial-gradient(circle at 5px 5px, #fff 0, #999 5px, transparent 6px), linear-gradient(to bottom, #777, #222);
  box-shadow: 2px 1px 1px #ddd, -1px 8px 4px -1px #6b5d40;
}

/* inner taskbar */
.remote-bar {
  height: 40px;
  flex: none;
  display: flex;
  align-items: stretch;
  gap: 3px;
  border-top: 1px solid #3b4a5c;
  box-shadow: inset 0 1px #d3e2f2;
  background: linear-gradient(to right, #7d92a9 0, #7d92a9 50px, #a4bddb 70px, #a4bddb 100%);
}

.remote-bar button {
  background: none;
}

.remote-bar .start {
  width: 56px;
}

.start svg {
  width: 44px;
  height: 44px;
  vertical-align: middle;
}

.remote-bar .start svg {
  width: 36px;
  height: 36px;
}

.remote-bar .task {
  width: 59px;
  border: 1px solid #5f7590;
  border-radius: 3px;
  box-shadow: inset 0 0 0 1px rgba(255, 255, 255, 0.6);
  background: linear-gradient(135deg, #dbe6f2 0, #a9bfda 60%, #bccfe4 100%);
}

.remote-bar .stacked {
  border-right: 5px double #5f7590;
}

.remote-bar .pinned {
  border: none;
  box-shadow: none;
  background: none;
}

.remote-bar .current {
  background: linear-gradient(135deg, #fff 0, #d4e0ee 60%, #e8eff7 100%);
}

.task svg {
  width: 32px;
  height: 32px;
  vertical-align: middle;
}

.xr-text {
  font: 12px "Open Sans", sans-serif;
  fill: #1a1a8c;
}

.cmd-text {
  font: 8px "Liberation Mono", monospace;
  fill: #fff;
}

.tray {
  margin-left: auto;
  display: flex;
  align-items: center;
  color: #fff;
}

.tray time {
  text-align: center;
}

.remote-bar .tray {
  gap: 8px;
  padding-left: 32px;
  background: linear-gradient(to right, #a4bddb 0, #7d92a9 34px);
}

.remote-bar .tray svg {
  width: 17px;
  height: 17px;
}

.tray .up,
.remote-bar .tray .up {
  width: 10px;
  height: 6px;
  margin-right: 4px;
}

.remote-bar time {
  padding: 0 4px 0 8px;
  font-size: 11px;
  line-height: 17px;
}

.peek {
  align-self: stretch;
  width: 14px;
}

.remote-bar .peek {
  border: 1px solid #b9c8d8;
  background: linear-gradient(to bottom, #8b9aaa 0, #5f6e7e 40%, #7d92a9 100%);
}

/* host taskbar */
.taskbar {
  position: absolute;
  left: 0;
  right: 0;
  bottom: 0;
  height: 48px;
  display: flex;
  align-items: stretch;
  gap: 4px;
  border-top: 1px solid #0a1a48;
  box-shadow: inset 0 1px #7f95c6;
  background: linear-gradient(to right, #1d3468 0, #1f3c7d 70px, #22418a 95px, #22418a 55%, #2d569f 80%, #2f589f 84%, #1f3f78 86%, #25457f 100%);
}

.taskbar button {
  background: none;
}

.taskbar .start {
  width: 66px;
}

.taskbar .item {
  width: 66px;
}

.item svg {
  width: 40px;
  height: 40px;
  vertical-align: middle;
}

.item .wmp {
  width: 36px;
  height: 36px;
}

.taskbar .open {
  border: 1px solid #e3eaf6;
  border-right: 6px double #b9c6e2;
  border-radius: 3px;
  background: linear-gradient(135deg, #c9d2e6 0, #8698c4 50%, #a9b6d6 100%);
}

.taskbar .tray {
  gap: 10px;
}

.taskbar .tray svg {
  width: 20px;
  height: 20px;
}

.taskbar .tray .up {
  width: 10px;
  height: 6px;
  margin-right: 9px;
}

.taskbar time {
  padding: 0 4px 0 12px;
  font-size: 14px;
  line-height: 22px;
}

.taskbar .peek {
  border: 1px solid #8298c4;
  background: linear-gradient(to bottom, #6d84b5 0, #1e3a78 45%, #2a4d97 100%);
}

.cursor {
  position: absolute;
  left: 1763px;
  top: 901px;
  width: 13px;
  height: 20px;
}
```
FILE: script.js
```js
// seeded generator so the plots look the same on every load
let seed = 1117609;
function rnd() {
  seed = (seed * 1664525 + 1013904223) >>> 0;
  return seed / 4294967296;
}

function prepare(id) {
  const canvas = document.getElementById(id);
  canvas.width = canvas.clientWidth;
  canvas.height = canvas.clientHeight;
  return canvas;
}

function interp(table, x) {
  for (let i = 1; i < table.length; i++) {
    if (x <= table[i][0]) {
      const a = table[i - 1];
      const b = table[i];
      const t = (x - a[0]) / (b[0] - a[0]);
      return a.slice(1).map((v, k) => v + (b[k + 1] - v) * t);
    }
  }
  return table[table.length - 1].slice(1);
}

function grid(ctx, w, h, rowStep) {
  ctx.fillStyle = '#000';
  ctx.fillRect(0, 0, w, h);
  for (let pass = 0; pass < 2; pass++) {
    ctx.fillStyle = pass ? '#0f5f18' : '#06330e';
    for (let i = 0; i <= 48; i++) {
      if ((i % 8 === 0) === !!pass) ctx.fillRect(Math.round(i * w / 48), 0, 1, h);
    }
    for (let i = 0; i * rowStep < h; i++) {
      if ((i % 5 === 0) === !!pass) ctx.fillRect(0, Math.round(i * rowStep), w, 1);
    }
  }
}

function drawAscope() {
  const canvas = prepare('ascope');
  const ctx = canvas.getContext('2d');
  const w = canvas.width;
  const h = canvas.height;
  grid(ctx, w, h, h / 21);
  const curve = [[0, 1.25], [430, 1.2], [530, 1.15], [620, 1.125], [720, 1.08], [850, 1.06], [1000, 1.047],
    [1300, 1.031], [1600, 1.018], [2000, 1.012], [2500, 1.010], [3000, 1.007], [12000, 1.007]];
  const y = v => (1.2 - v) / 0.21 * h;
  ctx.strokeStyle = '#fff';
  ctx.lineWidth = 1.5;
  ctx.beginPath();
  ctx.moveTo(0, y(1.035));
  ctx.lineTo(1, y(1.035));
  ctx.lineTo(1, -2);
  ctx.lineTo(430 / 12000 * w, -2);
  for (let r = 430; r <= 12000; r += 20) {
    const noise = (rnd() + rnd() - 1) * (r < 1000 ? 0.003 : 0.009);
    ctx.lineTo(r / 12000 * w, y(interp(curve, r)[0] + noise));
  }
  ctx.stroke();
  ctx.fillStyle = '#ffe94a';
  ctx.fillRect(Math.round(w * 0.981), 0, 1, h);
}

// dark gaps between the saturated samples: x, top, bottom, width, green
const gaps = [
  [247, 0, 1], [274, .56, 1], [283, 0, .77], [349, 0, 1], [379, .58, 1], [382, 0, .58], [463, 0, .28, 1, 1],
  [481, 0, 1, 1, 1], [517, 0, 1], [568, .55, 1, 2], [574, 0, .68], [581, 0, .04], [589, .67, 1], [601, 0, 1],
  [610, .24, 1], [616, 0, 1, 1, 1], [646, 0, .57], [664, 0, 1], [688, .62, 1, 2], [701, 0, .08], [703, 0, 1],
  [711, .57, 1, 1, 1], [724, .62, 1], [725, 0, .68, 2, 1], [743, 0, .73], [746, 0, 1], [808, .62, 1, 1, 1],
  [826, .57, 1, 2], [839, 0, .5, 2], [839, .5, 1], [862, 0, .71], [871, .08, 1], [889, 0, 1], [904, 0, .08],
  [914, .52, 1], [919, 0, 1, 2]
];

function drawVelocity() {
  const canvas = prepare('velocity');
  const ctx = canvas.getContext('2d');
  const w = canvas.width;
  const h = canvas.height;
  const k = w / 924;
  grid(ctx, w, h, h / 20);
  ctx.fillStyle = '#fff';
  ctx.fillRect(1, h * .47, 1, h);
  const edge = Math.round(210 * k);
  for (let x = 2; x < edge; x++) {
    const t = x / edge;
    const amp = t < .5 ? 1 : 1 + (t - .5) * 18;
    const mid = h * (.475 - .02 * t) - Math.sin(x / 5) * 1;
    const top = mid - rnd() * amp - 1;
    ctx.fillRect(x, top, 1, mid + rnd() * amp + 1 - top);
  }
  ctx.fillRect(196 * k, h * .5, 1, h);
  ctx.fillRect(200 * k, 0, 1, h * .5);
  ctx.fillRect(edge, 0, w, h);
  gaps.forEach(g => {
    ctx.fillStyle = g[4] ? '#0a4a12' : '#000';
    ctx.fillRect(Math.round(g[0] * k), g[1] * h, g[3] || 1, (g[2] - g[1]) * h);
  });
}

function heatmap(id, pixel) {
  const canvas = prepare(id);
  const ctx = canvas.getContext('2d');
  const w = canvas.width;
  const h = canvas.height;
  const img = ctx.createImageData(w, h);
  for (let y = 0; y < h; y++) {
    for (let x = 0; x < w; x++) {
      const c = pixel(x / w, 5000 * (1 - (y + 1) / h), x, y);
      const i = (y * w + x) * 4;
      img.data[i] = c[0];
      img.data[i + 1] = c[1];
      img.data[i + 2] = c[2];
      img.data[i + 3] = 255;
    }
  }
  ctx.putImageData(img, 0, 0);
}

// green - yellow - orange - red part of the colour scale
const warm = [[0, 0, 255, 0], [1, 255, 255, 48], [1.6, 255, 192, 0], [2.2, 255, 0, 0], [3.2, 156, 0, 160]];

const levels = [[0, 1.2], [90, 1.3], [300, 1.25], [450, 1.1], [560, 1], [620, .8], [700, .6], [850, .36], [1100, .28],
  [1500, .12], [2000, .06], [2500, .1], [3000, .12], [4000, .36], [5000, .7]];
const spread = [[0, .02], [1000, .05], [2400, .12], [3000, .3], [4000, .55], [5000, .7]];
const dropout = [[0, 0], [2000, 0], [2300, .003], [2600, .03], [2900, .07], [3050, .15], [3300, .14], [4000, .13], [4600, .17], [5000, .06]];

function backscatter(u, r) {
  if (r < 12) return rnd() < .6 ? [10, 30, 0] : [120, 255, 20];
  let p = interp(dropout, r)[0];
  if (Math.abs(r - 4310) < 10 || Math.abs(r - 3830) < 12) p = .42;
  if (rnd() < p) return [0, 30, 0];
  let v = interp(levels, r)[0] + (rnd() + rnd() - 1) * interp(spread, r)[0];
  const blob = .8 * Math.exp(-((u - .49) ** 2) / .002) + .2 * Math.exp(-((u - .4) ** 2) / .04);
  v += blob * Math.exp(-((r - 65) ** 2) / 1200);
  return interp(warm, Math.max(0, v));
}

// smooth lattice noise for the boundary layer
const lattice = Array.from({ length: 4096 }, rnd);
function smooth(x, y) {
  const xi = Math.floor(x);
  const yi = Math.floor(y);
  const s = t => t * t * (3 - 2 * t);
  const at = (a, b) => lattice[((b & 63) * 64 + (a & 63))];
  const fx = s(x - xi);
  const fy = s(y - yi);
  const top = at(xi, yi) * (1 - fx) + at(xi + 1, yi) * fx;
  const low = at(xi, yi + 1) * (1 - fx) + at(xi + 1, yi + 1) * fx;
  return top * (1 - fy) + low * fy;
}

const noisy = [[0, 0, 0], [60, 255, 20], [30, 190, 60], [255, 255, 40], [255, 170, 0], [240, 0, 60], [150, 0, 150],
  [60, 130, 150], [80, 80, 220], [190, 190, 190], [0, 0, 0], [150, 220, 40]];
const columns = Array.from({ length: 2000 }, (v, i) => {
  const wave = smooth(i / 6, 3) * .5;
  return { fill: Math.min(.97, .36 + rnd() * .75 - wave * .7), green: rnd() < .08, edge: 2450 + rnd() * 300, tint: rnd() - .5 };
});
const base = [[0, .3], [300, .22], [500, .28], [700, .38], [900, .3], [1200, .36], [1600, .62], [2000, .88], [2500, .9], [3000, .7]];
const grain = [[0, .04], [1000, .06], [1300, .14], [1600, .3], [2000, .55], [2600, .9], [3000, 1]];
const eddies = [[0, 1], [600, 1], [800, .4], [1100, 0], [5000, 0]];

function doppler(u, r, x) {
  const col = columns[x];
  if (r < 12 && rnd() < .3) return [0, 0, 0];
  if (r > col.edge) {
    if (col.green && rnd() < .5) return rnd() < .5 ? [40, 230, 30] : [150, 220, 40];
    if (rnd() < col.fill) return [255, 0, 245];
    return noisy[Math.floor(rnd() * noisy.length)];
  }
  if (r > 1900 && rnd() < Math.max(0, (r - 1900) / (col.edge - 1900)) ** 3 * .35) {
    return rnd() < .5 ? [255, 0, 200] : [230, 60, 30];
  }
  let v = interp(base, r)[0];
  const e = interp(eddies, r)[0];
  v += e * ((smooth(u * 8 + 5, r / 110) - .5) * .45 + (smooth(u * 26, r / 55 + 20) - .5) * .4);
  v += (Math.exp(-((u - .62) ** 2) / .08) - .5) * interp([[0, .1], [600, .25], [1200, .5], [5000, .4]], r)[0];
  v += (rnd() + rnd() - 1) * interp(grain, r)[0];
  v += col.tint * interp([[0, .02], [900, .03], [1400, .16], [5000, .2]], r)[0];
  return interp(warm, Math.max(0, v));
}

drawAscope();
drawVelocity();
heatmap('backscatter', backscatter);
heatmap('doppler', doppler);
```
